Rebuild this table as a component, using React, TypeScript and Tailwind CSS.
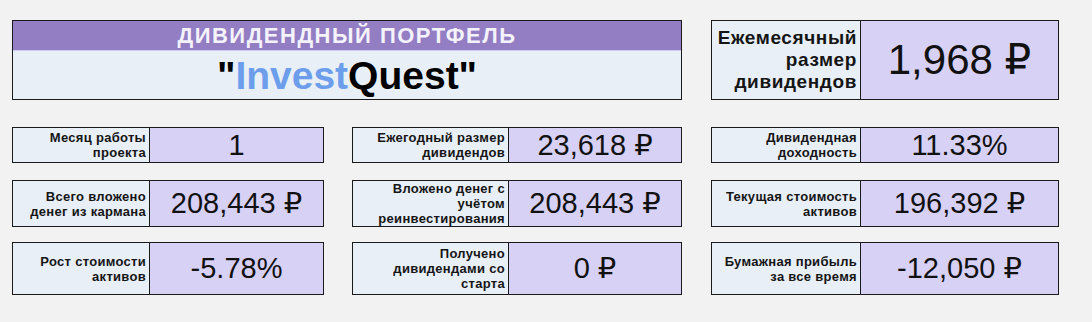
import React from "react";

const font = { fontFamily: '"Liberation Sans", Arial, "DejaVu Sans", sans-serif' };

type CardProps = {
  label: string;
  value: string;
  w: string;
  lw: string;
  h: string;
};

function Card({ label, value, w, lw, h }: CardProps) {
  return (
    <div className={`flex border border-[#1a1a1a] ${w} ${h}`}>
      <div
        className={`flex shrink-0 items-center justify-end border-r border-[#1a1a1a] bg-[#e8eff7] pr-[3px] text-right text-[13px] font-bold leading-[15px] tracking-[0.3px] text-[#151515] ${lw}`}
      >
        <span className="whitespace-pre-line">{label}</span>
      </div>
      <div className="flex flex-1 items-center justify-center bg-[#d8d1f6] text-[29px] leading-none text-[#111]">
        {value}
      </div>
    </div>
  );
}

export default function App() {
  return (
    <div className="h-[322px] w-[1092px] bg-[#f2f2f2] pl-[12px] pt-[20px]" style={font}>
      <div className="flex gap-[29px]">
        <div className="flex h-[80px] w-[670px] flex-col border border-[#1a1a1a]">
          <div className="flex h-[30px] items-center justify-center border-b border-[#cfc8f0] bg-[#937dc3] text-[22px] font-bold leading-none tracking-[1.5px] text-[#f4f2fb]">
            ДИВИДЕНДНЫЙ ПОРТФЕЛЬ
          </div>
          <div className="flex flex-1 items-center justify-center bg-[#e8eff7] text-[39px] font-bold leading-none text-black">
            <span>
              "<span className="text-[#6d9eeb]">Invest</span>Quest"
            </span>
          </div>
        </div>
        <div className="flex h-[80px] w-[348px] border border-[#1a1a1a]">
          <div className="flex w-[149px] shrink-0 items-center justify-end border-r border-[#1a1a1a] bg-[#e8eff7] pr-[3px] text-right text-[19px] font-bold leading-[22px] tracking-[0.6px] text-[#151515]">
            <span>
              Ежемесячный
              <br />
              размер
              <br />
              дивидендов
            </span>
          </div>
          <div className="flex flex-1 items-center justify-center bg-[#d8d1f6] text-[42px] leading-none text-[#111]">
            1,968 ₽
          </div>
        </div>
      </div>

      <div className="mt-[27px] flex gap-[28px]">
        <Card w="w-[312px]" lw="w-[137px]" h="h-[36px]" label={"Месяц работы\nпроекта"} value="1" />
        <div className="flex gap-[29px]">
          <Card w="w-[330px]" lw="w-[156px]" h="h-[36px]" label={"Ежегодный размер\nдивидендов"} value="23,618 ₽" />
          <Card w="w-[348px]" lw="w-[149px]" h="h-[36px]" label={"Дивидендная\nдоходность"} value="11.33%" />
        </div>
      </div>

      <div className="mt-[17px] flex gap-[28px]">
        <Card w="w-[312px]" lw="w-[137px]" h="h-[47px]" label={"Всего вложено\nденег из кармана"} value="208,443 ₽" />
        <div className="flex gap-[29px]">
          <Card w="w-[330px]" lw="w-[156px]" h="h-[47px]" label={"Вложено денег с\nучётом\nреинвестирования"} value="208,443 ₽" />
          <Card w="w-[348px]" lw="w-[149px]" h="h-[47px]" label={"Текущая стоимость\nактивов"} value="196,392 ₽" />
        </div>
      </div>

      <div className="mt-[15px] flex gap-[28px]">
        <Card w="w-[312px]" lw="w-[137px]" h="h-[53px]" label={"Рост стоимости\nактивов"} value="-5.78%" />
        <div className="flex gap-[29px]">
          <Card w="w-[330px]" lw="w-[156px]" h="h-[53px]" label={"Получено\nдивидендами со\nстарта"} value="0 ₽" />
          <Card w="w-[348px]" lw="w-[149px]" h="h-[53px]" label={"Бумажная прибыль\nза все время"} value="-12,050 ₽" />
        </div>
      </div>
    </div>
  );
}
